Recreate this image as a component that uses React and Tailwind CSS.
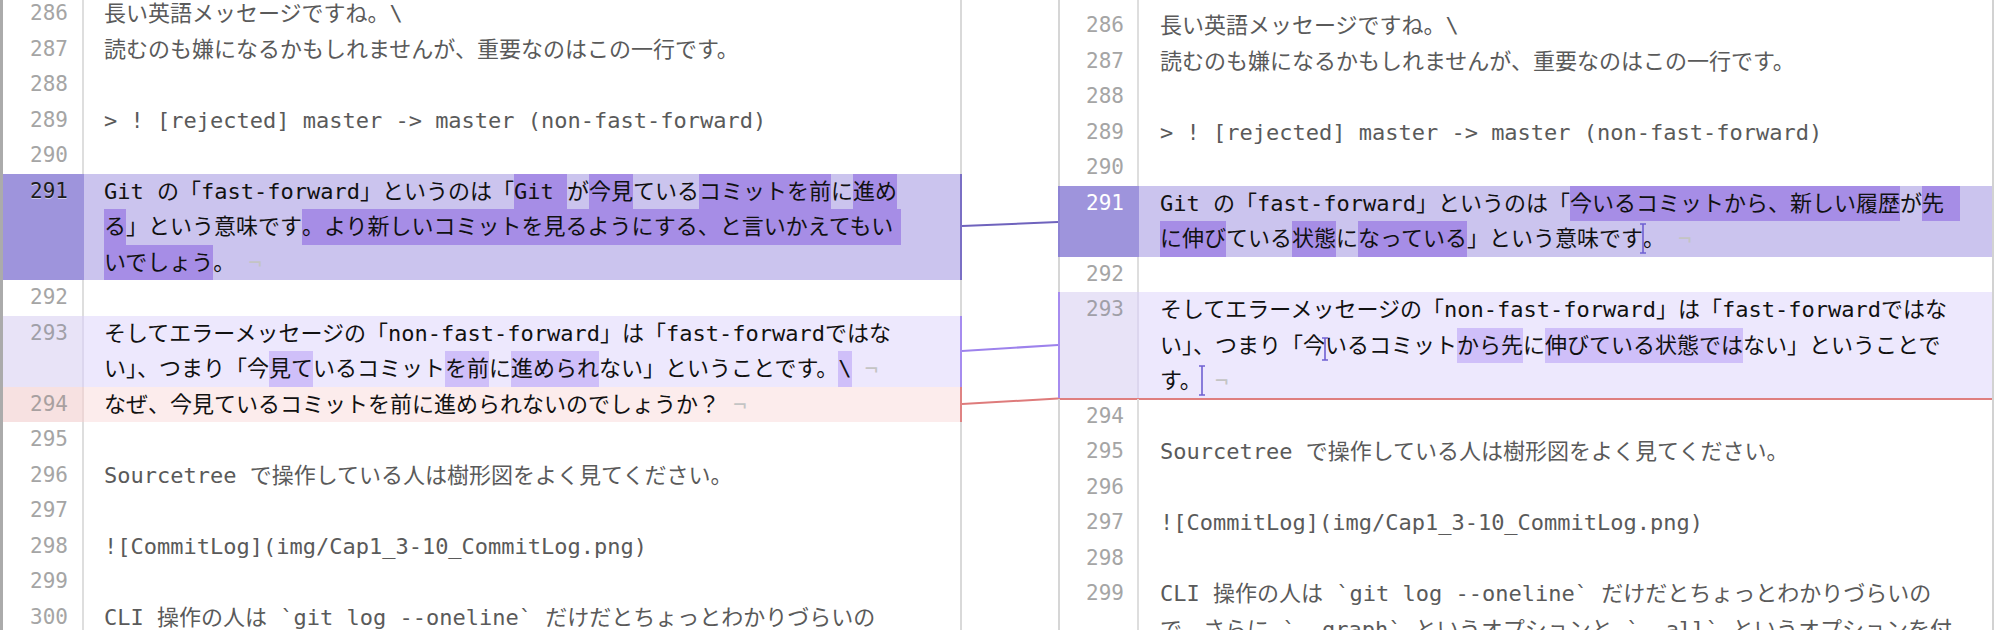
import React from "react";

const MONO = "font-['DejaVu_Sans_Mono','Noto_Sans_CJK_JP',monospace]";

const H = (t, pad = 0) => ({ t, h: true, pad });
const EOL = { eol: true };
const CUR = { cur: true };
const CUR_SHORT = { cur: true, short: true };

const KINDS = {
  plain: {
    gutter: "border-[#dedede]",
    body: "",
    text: "text-[#5a5a5a]",
    num: "text-[#a5a5a5]",
    hl: "",
  },
  strong: {
    gutter: "bg-[#9e94dc] border-[#9e94dc]",
    body: "bg-[#cbc4ee]",
    text: "text-[#111111]",
    num: "text-[#1d1d1d] [text-shadow:0_1px_0_rgba(255,255,255,0.55)]",
    hl: "bg-[#a68de6]",
  },
  light: {
    gutter: "bg-[#e8e3f7] border-[#dcd6ee]",
    body: "bg-[#ede8fd]",
    text: "text-[#111111]",
    num: "text-[#a09fa8]",
    hl: "bg-[#cfbff9]",
  },
  del: {
    gutter: "bg-[#f7e1e1] border-[#ecd6d6]",
    body: "bg-[#fcecec]",
    text: "text-[#111111]",
    num: "text-[#a8a0a0]",
    hl: "",
  },
};

// colour of the pane edge next to the connector column
const EDGE = {
  plain: "border-[#d9d9d9]",
  strong: "border-[#7a6fc4]",
  light: "border-[#a68cef]",
  del: "border-[#df8383]",
};

const RIGHT_EDGE = {
  plain: "border-[#d6d6d6]",
  strong: "border-[#8e84d4]",
  light: "border-[#a68cef]",
  del: "border-[#df8383]",
};

// row 285 is only a sliver above the top edge, so its number is left out
const left = [
  { id: 285, n: "", lines: [[""]] },
  { n: 286, lines: [["長い英語メッセージですね。\\"]] },
  { n: 287, lines: [["読むのも嫌になるかもしれませんが、重要なのはこの一行です。"]] },
  { n: 288, lines: [[""]] },
  { n: 289, lines: [["> ! [rejected] master -> master (non-fast-forward)"]] },
  { n: 290, lines: [[""]] },
  {
    n: 291,
    kind: "strong",
    lines: [
      ["Git の「fast-forward」というのは「", H("Git "), "が", H("今見"), "ている", H("コミットを前"), "に", H("進め")],
      [H("る"), "」という意味です", H("。より新しいコミットを見るようにする、と言いかえてもい", 8)],
      [H("いでしょう"), "。", EOL],
    ],
  },
  { n: 292, lines: [[""]] },
  {
    n: 293,
    kind: "light",
    lines: [
      ["そしてエラーメッセージの「non-fast-forward」は「fast-forwardではな"],
      ["い」、つまり「今", H("見て"), "いるコミット", H("を前"), "に", H("進められ"), "ない」ということです。", H("\\"), EOL],
    ],
  },
  { n: 294, kind: "del", lines: [["なぜ、今見ているコミットを前に進められないのでしょうか？", EOL]] },
  { n: 295, lines: [[""]] },
  { n: 296, lines: [["Sourcetree で操作している人は樹形図をよく見てください。"]] },
  { n: 297, lines: [[""]] },
  { n: 298, lines: [["![CommitLog](img/Cap1_3-10_CommitLog.png)"]] },
  { n: 299, lines: [[""]] },
  {
    n: 300,
    lines: [
      ["CLI 操作の人は `git log --oneline` だけだとちょっとわかりづらいの"],
      ["で、さらに `--graph` というオプションと `--all` というオプションを付"],
    ],
  },
];

const right = [
  { id: 285, n: "", lines: [[""]] },
  { n: 286, lines: [["長い英語メッセージですね。\\"]] },
  { n: 287, lines: [["読むのも嫌になるかもしれませんが、重要なのはこの一行です。"]] },
  { n: 288, lines: [[""]] },
  { n: 289, lines: [["> ! [rejected] master -> master (non-fast-forward)"]] },
  { n: 290, lines: [[""]] },
  {
    n: 291,
    kind: "strong",
    lines: [
      ["Git の「fast-forward」というのは「", H("今いるコミットから、新しい履歴"), "が", H("先", 16)],
      [H("に伸び"), "ている", H("状態"), "に", H("なっている"), "」という意味です", CUR, "。", EOL],
    ],
  },
  { n: 292, lines: [[""]] },
  {
    n: 293,
    kind: "light",
    deleteMark: true,
    lines: [
      ["そしてエラーメッセージの「non-fast-forward」は「fast-forwardではな"],
      ["い」、つまり「今", CUR_SHORT, "いるコミット", H("から先"), "に", H("伸びている状態では"), "ない」ということで"],
      ["す。", CUR, EOL],
    ],
  },
  { n: 294, lines: [[""]] },
  { n: 295, lines: [["Sourcetree で操作している人は樹形図をよく見てください。"]] },
  { n: 296, lines: [[""]] },
  { n: 297, lines: [["![CommitLog](img/Cap1_3-10_CommitLog.png)"]] },
  { n: 298, lines: [[""]] },
  {
    n: 299,
    lines: [
      ["CLI 操作の人は `git log --oneline` だけだとちょっとわかりづらいの"],
      ["で、さらに `--graph` というオプションと `--all` というオプションを付"],
    ],
  },
];

const Cursor = ({ short }) => {
  const h = short ? 24 : 31;
  return (
    <span className="relative inline-block w-0 h-[35.5px] align-top">
      <span className={`absolute left-[-4px] ${short ? "top-[9px]" : "top-[2px]"}`}>
        <svg width="8" height={h} viewBox={`0 0 8 ${h}`} className="block">
          <path d={`M1 1H7M4 1V${h - 1}M1 ${h - 1}H7`} stroke="#6f60d2" strokeWidth="1.6" fill="none" />
        </svg>
      </span>
    </span>
  );
};

const Line = ({ segs, hl }) => (
  <div className="h-[35.5px] leading-[35.5px] whitespace-pre">
    {segs.map((s, i) => {
      if (typeof s === "string") return <span key={i}>{s}</span>;
      if (s.eol) return <span key={i} className="text-[#c4c4c4]"> ¬</span>;
      if (s.cur) return <Cursor key={i} short={s.short} />;
      return (
        <span
          key={i}
          className={`inline-block h-[35.5px] ${hl}`}
          style={s.pad ? { paddingRight: s.pad } : undefined}
        >
          {s.t}
        </span>
      );
    })}
  </div>
);

const LineNumber = ({ n, cls }) => (
  <div className={`h-[35.5px] leading-[35.5px] text-[21px] ${cls}`}>{n}</div>
);

const LeftRow = ({ row }) => {
  const k = KINDS[row.kind || "plain"];
  return (
    <div className="flex border-l-[3px] border-[#ababab]">
      <div className={`w-[81px] shrink-0 border-r-2 pr-[14px] text-right ${k.gutter}`}>
        <LineNumber n={row.n} cls={k.num} />
      </div>
      <div className={`flex-1 pl-[20px] border-r-2 ${EDGE[row.kind || "plain"]} ${k.body} ${k.text}`}>
        {row.lines.map((l, i) => (
          <Line key={i} segs={l} hl={k.hl} />
        ))}
      </div>
    </div>
  );
};

const RightRow = ({ row }) => {
  const k = KINDS[row.kind || "plain"];
  const isWhiteNum = row.kind === "strong";
  return (
    <div className={`relative flex border-l-2 ${RIGHT_EDGE[row.kind || "plain"]}`}>
      <div className={`w-[79px] shrink-0 border-r-2 pr-[13px] text-right ${k.gutter}`}>
        <LineNumber n={row.n} cls={isWhiteNum ? "text-white" : k.num} />
      </div>
      <div className={`flex-1 pl-[21px] ${k.body} ${k.text}`}>
        {row.lines.map((l, i) => (
          <Line key={i} segs={l} hl={k.hl} />
        ))}
      </div>
      {row.deleteMark && (
        <div className="absolute -left-[2px] right-0 -bottom-[1px] h-[2px] bg-[#df7f7f]" />
      )}
    </div>
  );
};

const Connectors = () => (
  <svg width="96" height="630" viewBox="0 0 96 630" className="block">
    <line x1="0" y1="226" x2="96" y2="222" stroke="#6f63bd" strokeWidth="2" />
    <line x1="0" y1="351" x2="96" y2="345" stroke="#9d82ec" strokeWidth="2" />
    <line x1="0" y1="404" x2="96" y2="398.5" stroke="#de7b7b" strokeWidth="2" />
  </svg>
);

export default function App() {
  return (
    <div className={`w-[1996px] h-[630px] overflow-hidden bg-white flex text-[22px] ${MONO}`}>
      <div className="w-[962px] shrink-0">
        <div className="-mt-[39.5px]">
          {left.map((r) => (
            <LeftRow key={r.id || r.n} row={r} />
          ))}
        </div>
      </div>
      <div className="w-[96px] shrink-0">
        <Connectors />
      </div>
      <div className="w-[936px] shrink-0 border-r-2 border-[#d2d2d2]">
        <div className="-mt-[27.5px]">
          {right.map((r) => (
            <RightRow key={r.id || r.n} row={r} />
          ))}
        </div>
      </div>
    </div>
  );
}
